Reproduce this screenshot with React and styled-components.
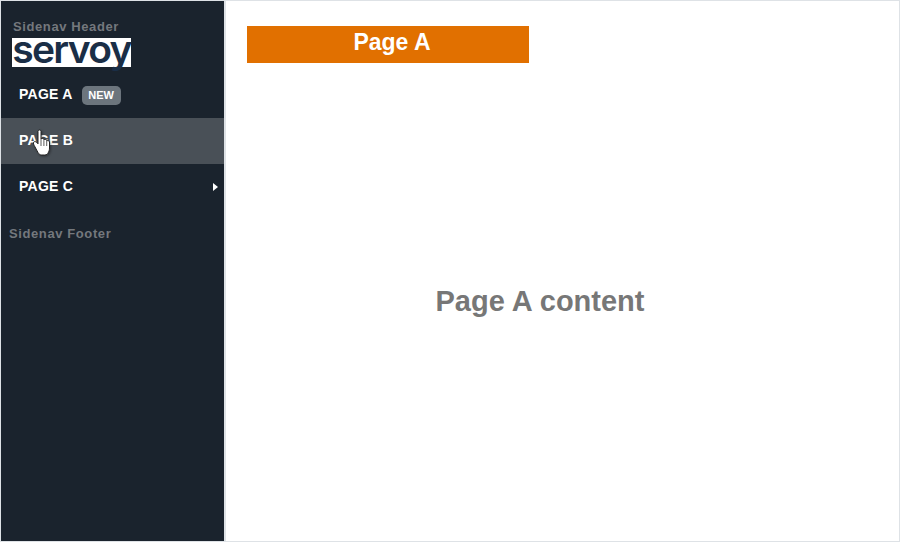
import React from 'react';
import styled, { createGlobalStyle } from 'styled-components';

const GlobalStyle = createGlobalStyle`
    html, body {
        margin: 0;
        padding: 0;
        background: #fff;
    }
    body {
        font-family: "Liberation Sans", Arial, sans-serif;
    }
`;

const Frame = styled.div`
    box-sizing: border-box;
    width: 900px;
    height: 542px;
    display: flex;
    border: 1px solid #dee2e6;
    background: #fff;
`;

const Sidenav = styled.aside`
    box-sizing: border-box;
    width: 225px;
    flex: none;
    display: flex;
    flex-direction: column;
    background: #1a232d;
    border-right: 2px solid #dee2e6;
`;

const SidenavHeader = styled.div`
    padding: 18px 0 0 12px;
    height: 71px;
    box-sizing: border-box;
`;

const SideLabel = styled.div`
    font-size: 13px;
    line-height: 14px;
    font-weight: bold;
    letter-spacing: 0.6px;
    color: #74787d;
`;

const HeaderLabel = styled(SideLabel)`
    line-height: 15px;
    margin-bottom: 4px;
`;

const Logo = styled.div`
    width: 119px;
    height: 29px;
    margin-left: -1px;
    background: #fff;
    text-align: center;
    white-space: nowrap;
    font-family: Inter, sans-serif;
    font-size: 39px;
    line-height: 21px;
    font-weight: 600;
    letter-spacing: -1.7px;
    color: #1a2e46;
`;

const Menu = styled.nav`
    display: flex;
    flex-direction: column;
`;

const MenuItem = styled.div`
    height: 46px;
    display: flex;
    align-items: center;
    position: relative;
    padding: 0 6px 0 18px;
    font-size: 14px;
    font-weight: bold;
    letter-spacing: 0.25px;
    color: #fff;
    background: ${(p) => (p.$active ? '#495057' : 'transparent')};
`;

const MenuText = styled.span`
    position: relative;
    top: -1px;
`;

const Badge = styled.span`
    margin-left: 9px;
    width: 39px;
    height: 19px;
    border-radius: 5px;
    background: #6c757d;
    display: flex;
    align-items: center;
    justify-content: center;
    font-size: 11px;
    font-weight: bold;
    letter-spacing: 0;
    color: #fff;
`;

const Caret = styled.span`
    margin-left: auto;
    width: 0;
    height: 0;
    border-style: solid;
    border-width: 4px 0 4px 5px;
    border-color: transparent transparent transparent #fff;
`;

const FooterLabel = styled(SideLabel)`
    margin: 17px 0 0 8px;
`;

const HandCursor = styled.svg`
    position: absolute;
    left: 32px;
    top: 11px;
    width: 18px;
    height: 27px;
    filter: drop-shadow(1px 1px 1px rgba(0, 0, 0, 0.35));
`;

const Main = styled.main`
    flex: 1;
    display: flex;
    flex-direction: column;
    padding: 25px 0 2px 21px;
    box-sizing: border-box;
    min-width: 0;
`;

const PageTitle = styled.div`
    width: 282px;
    height: 37px;
    box-sizing: border-box;
    padding-left: 8px;
    background: #e17000;
    color: #fff;
    font-size: 23px;
    font-weight: bold;
    line-height: 33px;
    text-align: center;
`;

const Content = styled.div`
    width: 586px;
    flex: 1;
    display: flex;
    align-items: center;
    justify-content: center;
    font-size: 29px;
    font-weight: bold;
    color: #777;
`;

export default function App() {
    return (
        <>
            <GlobalStyle />
            <Frame>
                <Sidenav>
                    <SidenavHeader>
                        <HeaderLabel>Sidenav Header</HeaderLabel>
                        <Logo>servoy</Logo>
                    </SidenavHeader>
                    <Menu>
                        <MenuItem>
                            <MenuText>PAGE A</MenuText>
                            <Badge>NEW</Badge>
                        </MenuItem>
                        <MenuItem $active>
                            <MenuText>PAGE B</MenuText>
                            <HandCursor viewBox="0 0 18 27">
                                <path
                                    d="M5 2.400c0-1.900 3-1.900 3 0v8c.3-1.300 2.600-1.300 2.900 0v.8c.3-1.100 2.600-1.100 2.800.2v.8c.4-1 2.500-.8 2.800.6v6.200c0 2.400-.7 3.500-1.300 4.700-.6 1.300-1.700 2.300-3.400 2.300h-3c-1.600 0-2.700-.8-3.600-2.100L1.200 16.400c-1.300-2-.8-3.600.3-3.800 1-.2 2.300.6 3.500 2.200z"
                                    fill="#fff"
                                    stroke="#222"
                                    strokeWidth="1"
                                    strokeLinejoin="round"
                                />
                                <path d="M8 11v6M10.900 11.500v5.500M13.700 12.400v4.600" stroke="#333" strokeWidth="0.8" fill="none" />
                            </HandCursor>
                        </MenuItem>
                        <MenuItem>
                            <MenuText>PAGE C</MenuText>
                            <Caret />
                        </MenuItem>
                    </Menu>
                    <FooterLabel>Sidenav Footer</FooterLabel>
                </Sidenav>
                <Main>
                    <PageTitle>Page A</PageTitle>
                    <Content>Page A content</Content>
                </Main>
            </Frame>
        </>
    );
}
